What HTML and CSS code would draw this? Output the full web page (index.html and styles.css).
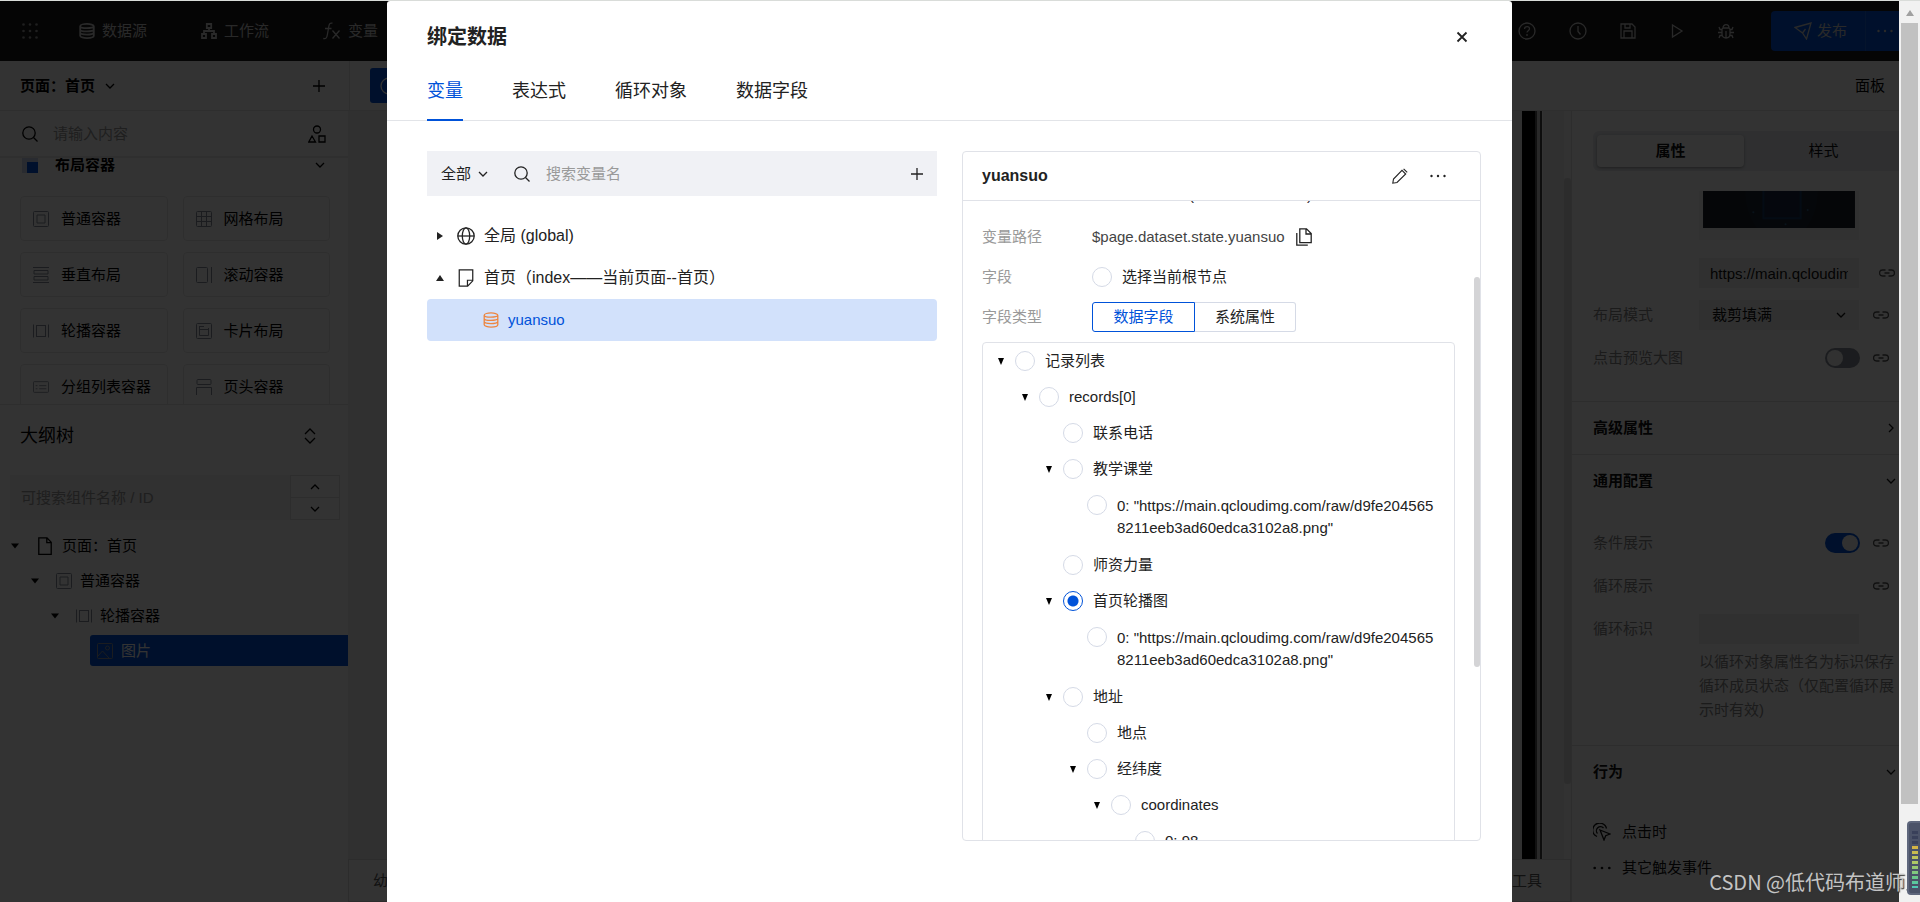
FILE: index.html
```html
<!DOCTYPE html>
<html lang="zh-CN">
<head>
<meta charset="utf-8">
<meta name="viewport" content="width=device-width, initial-scale=1">
<title>绑定数据</title>
<link rel="stylesheet" href="styles.css">
</head>
<body>
<svg class="sprite" aria-hidden="true">
  <symbol id="i-grid" viewBox="0 0 16 16"><g fill="currentColor" stroke="none"><circle cx="1.5" cy="1.5" r="1.3"/><circle cx="8" cy="1.5" r="1.3"/><circle cx="14.5" cy="1.5" r="1.3"/><circle cx="1.5" cy="8" r="1.3"/><circle cx="8" cy="8" r="1.3"/><circle cx="14.5" cy="8" r="1.3"/><circle cx="1.5" cy="14.5" r="1.3"/><circle cx="8" cy="14.5" r="1.3"/><circle cx="14.5" cy="14.5" r="1.3"/></g></symbol>
  <symbol id="i-db" viewBox="0 0 16 16"><path d="M1.200 3.200C1.200.2 14.800.2 14.800 3.200v9.600c0 3-13.600 3-13.600 0zM1.200 3.200c0 2.600 13.600 2.600 13.600 0M1.200 6.400c0 2.600 13.600 2.600 13.600 0M1.200 9.600c0 2.600 13.600 2.600 13.600 0"/></symbol>
  <symbol id="i-flow" viewBox="0 0 16 16"><path d="M5.800 1h4.400v4H5.800zM1 11h4v4H1zM11 11h4v4h-4zM8 5v3M3 11V8h10v3"/></symbol>
  <symbol id="i-fx" viewBox="0 0 18 18"><path d="M9.500 1.200C7 .5 6.200 2 5.800 4.500L4.300 13c-.5 3-1.500 4.200-4 3.500M2 6.500h6.500M9.500 8.500l7 8M16.500 8.500l-7 8"/></symbol>
  <symbol id="i-down" viewBox="0 0 16 16"><path d="M4 6l4 4 4-4"/></symbol>
  <symbol id="i-up" viewBox="0 0 16 16"><path d="M4 10l4-4 4 4"/></symbol>
  <symbol id="i-right" viewBox="0 0 16 16"><path d="M6 4l4 4-4 4"/></symbol>
  <symbol id="i-updown" viewBox="0 0 16 16"><path d="M3 6l5-5 5 5M3 10l5 5 5-5"/></symbol>
  <symbol id="i-plus" viewBox="0 0 16 16"><path d="M8 2v12M2 8h12"/></symbol>
  <symbol id="i-search" viewBox="0 0 16 16"><circle cx="7" cy="7" r="6.200"/><path d="M11.500 11.500l4 4"/></symbol>
  <symbol id="i-shapes" viewBox="0 0 18 18"><circle cx="9" cy="4.500" r="3.500"/><path d="M4 11l3.500 6H.8zM11 11h6v6h-6z"/></symbol>
  <symbol id="i-box" viewBox="0 0 16 16"><rect x=".5" y=".5" width="15" height="15" rx="1"/><path d="M4 4h8v8H4z"/></symbol>
  <symbol id="i-table" viewBox="0 0 16 16"><rect x=".5" y=".5" width="15" height="15" rx="1"/><path d="M.5 5.500h15M.5 10.500h15M5.500.5v15M10.500.5v15"/></symbol>
  <symbol id="i-rows" viewBox="0 0 16 16"><path d="M0 .5h16M0 15.500h16M1 3.500h14v3.500H1zM1 9.500h14v3.500H1z"/></symbol>
  <symbol id="i-scroll" viewBox="0 0 16 16"><rect x=".5" y=".5" width="11" height="15" rx="1"/><path d="M15.500 0v16"/></symbol>
  <symbol id="i-swiper" viewBox="0 0 16 16"><path d="M.5 1.500v13M15.500 1.500v13"/><rect x="3.500" y="2.500" width="9" height="11"/></symbol>
  <symbol id="i-card" viewBox="0 0 16 16"><rect x=".5" y=".5" width="15" height="15" rx="1"/><path d="M3 3.500h5M3.500 6.500h9v6h-9zM3.500 3v4M12.500 5v2"/></symbol>
  <symbol id="i-list" viewBox="0 0 18 16"><rect x=".5" y="2" width="17" height="12" rx="1"/><path d="M3 6.500h2M3 10h2M7 6.500h8M7 10h8"/></symbol>
  <symbol id="i-head" viewBox="0 0 16 16"><rect x="1" y=".5" width="14" height="5" rx="1"/><path d="M.5 16V8.500h15V16"/></symbol>
  <symbol id="i-file" viewBox="0 0 14 18"><path d="M1.500.8h7.500l4.200 4.500v12H.8V.8zM8.800.8v4.800h4.400"/></symbol>
  <symbol id="i-image" viewBox="0 0 16 16"><rect x=".5" y=".5" width="15" height="15" rx="1"/><circle cx="10.500" cy="5" r="2"/><path d="M1 13l4.500-5 6.500 7"/></symbol>
  <symbol id="i-help" viewBox="0 0 18 18"><circle cx="9" cy="9" r="8"/><path d="M6.500 7c0-3.200 5-3.200 5-.2 0 1.800-2.500 2-2.500 3.700M9 12v2"/></symbol>
  <symbol id="i-clock" viewBox="0 0 18 18"><circle cx="9" cy="9" r="8"/><path d="M9 4v5.500l2.500 3"/></symbol>
  <symbol id="i-save" viewBox="0 0 16 16"><path d="M1 1h11l3 3v11H1zM4 15V8h8v7M5 1v4h5V1"/></symbol>
  <symbol id="i-play" viewBox="0 0 16 16"><path d="M3.500 2l9.500 6-9.500 6z"/></symbol>
  <symbol id="i-bug" viewBox="0 0 16 16"><path d="M4 7c0-1 .5-1.800 1-2h6c.5.2 1 1 1 2v4c0 5.300-8 5.300-8 0zM5 5c0-4.500 6-4.500 6 0M8 8v7M0 9.500h4M12 9.500h4M1 4l1 2.500h2M15 4l-1 2.500h-2M1 15l1-2.500h2M15 15l-1-2.500h-2"/></symbol>
  <symbol id="i-plane" viewBox="0 0 18 18"><path d="M1 5.500L17 1l-4.500 16-4-6zM8.500 11l3-4"/></symbol>
  <symbol id="i-dots" viewBox="0 0 16 16"><g fill="currentColor" stroke="none"><circle cx="1.500" cy="8" r="1.200"/><circle cx="8" cy="8" r="1.200"/><circle cx="14.500" cy="8" r="1.200"/></g></symbol>
  <symbol id="i-link" viewBox="0 0 16 16"><path d="M6.500 5H3.500a2.800 2.800 0 0 0 0 6h3M9.500 5h3a2.800 2.800 0 0 1 0 6h-3M5.500 8h5"/></symbol>
  <symbol id="i-click" viewBox="0 0 18 18"><path d="M7 7l10 4-4.300 1.700L11 17zM4.500 10.500A4 4 0 1 1 10.500 5M4 13.500A7 7 0 1 1 13.500 5.500"/></symbol>
  <symbol id="i-close" viewBox="0 0 16 16"><path d="M3.500 3.500l9 9M12.500 3.500l-9 9"/></symbol>
  <symbol id="i-globe" viewBox="0 0 18 18"><circle cx="9" cy="9" r="8.200"/><ellipse cx="9" cy="9" rx="3.700" ry="8.200"/><path d="M.8 9h16.400"/></symbol>
  <symbol id="i-note" viewBox="0 0 16 16"><path d="M2 .7h12v9.800L9.500 15.300H2zM14 10H9.300v5.300"/></symbol>
  <symbol id="i-pencil" viewBox="0 0 16 16"><path d="M.8 15.200l.7-4.200L10 2.300l3.700 3.700L5 14.500zM11.600.8l3.600 3.600"/></symbol>
  <symbol id="i-copy" viewBox="0 0 16 18"><path d="M3.800.8h6.700l4.700 4.700v9.200H3.800zM10 .8V6h5.200M.8 5v12.200h11"/></symbol>
  <symbol id="i-tri-down" viewBox="0 0 8 8"><path d="M0 1.500h8L4 6.500z" fill="currentColor" stroke="none"/></symbol>
  <symbol id="i-tri-slim" viewBox="0 0 8 8"><path d="M1 1h6L4 8z" fill="currentColor" stroke="none"/></symbol>
  <symbol id="i-tri-up" viewBox="0 0 8 8"><path d="M0 7h8L4 1z" fill="currentColor" stroke="none"/></symbol>
  <symbol id="i-tri-right" viewBox="0 0 8 8"><path d="M1 0v8l6-4z" fill="currentColor" stroke="none"/></symbol>
</svg>

<div class="window">
  <div class="app">
    <header class="topbar">
      <button class="ghost" aria-label="菜单"><svg class="ic"><use href="#i-grid"/></svg></button>
      <nav class="topnav">
        <a href="#data"><svg class="ic bold"><use href="#i-db"/></svg>数据源</a>
        <a href="#flow"><svg class="ic bold"><use href="#i-flow"/></svg>工作流</a>
        <a href="#var"><svg class="ic l"><use href="#i-fx"/></svg>变量</a>
      </nav>
      <div class="tools">
        <button class="ghost" aria-label="帮助"><svg class="ic l"><use href="#i-help"/></svg></button>
        <button class="ghost" aria-label="历史"><svg class="ic l"><use href="#i-clock"/></svg></button>
        <button class="ghost" aria-label="保存"><svg class="ic"><use href="#i-save"/></svg></button>
        <button class="ghost" aria-label="预览"><svg class="ic"><use href="#i-play"/></svg></button>
        <button class="ghost" aria-label="调试"><svg class="ic"><use href="#i-bug"/></svg></button>
      </div>
      <div class="publish">
        <button class="publish-main"><svg class="ic l"><use href="#i-plane"/></svg>发布</button>
        <button class="publish-more" aria-label="更多"><svg class="ic"><use href="#i-dots"/></svg></button>
      </div>
    </header>

    <div class="subbar">
      <div class="pagebar">
        <button class="page-switch">页面：首页<svg class="ic"><use href="#i-down"/></svg></button>
        <button class="ghost" aria-label="新建页面"><svg class="ic"><use href="#i-plus"/></svg></button>
      </div>
      <div class="stagebar">
        <button class="stage-btn" aria-label="模式"><svg class="ic l"><use href="#i-clock"/></svg></button>
        <span class="panel-link">面板</span>
      </div>
    </div>

    <div class="main">
      <aside class="left">
        <div class="lib-search">
          <svg class="ic"><use href="#i-search"/></svg>
          <input type="text" placeholder="请输入内容" aria-label="搜索组件">
          <svg class="ic l"><use href="#i-shapes"/></svg>
        </div>
        <div class="library">
          <div class="lib-inner">
            <div class="lib-head"><span class="lib-logo"></span><b>布局容器</b><svg class="ic"><use href="#i-down"/></svg></div>
            <div class="cards">
              <button class="card"><svg class="ic dim"><use href="#i-box"/></svg>普通容器</button>
              <button class="card"><svg class="ic dim"><use href="#i-table"/></svg>网格布局</button>
              <button class="card"><svg class="ic dim"><use href="#i-rows"/></svg>垂直布局</button>
              <button class="card"><svg class="ic dim"><use href="#i-scroll"/></svg>滚动容器</button>
              <button class="card"><svg class="ic dim"><use href="#i-swiper"/></svg>轮播容器</button>
              <button class="card"><svg class="ic dim"><use href="#i-card"/></svg>卡片布局</button>
              <button class="card"><svg class="ic dim"><use href="#i-list"/></svg>分组列表容器</button>
              <button class="card"><svg class="ic dim"><use href="#i-head"/></svg>页头容器</button>
            </div>
          </div>
        </div>
        <section class="outline">
          <div class="outline-head"><span>大纲树</span><svg class="ic"><use href="#i-updown"/></svg></div>
          <div class="outline-search">
            <input type="text" placeholder="可搜索组件名称 / ID" aria-label="搜索大纲">
            <div class="stepper">
              <button aria-label="上一个"><svg class="ic"><use href="#i-up"/></svg></button>
              <button aria-label="下一个"><svg class="ic"><use href="#i-down"/></svg></button>
            </div>
          </div>
          <ul class="otree">
            <li><div class="orow"><svg class="tri"><use href="#i-tri-down"/></svg><svg class="ic l"><use href="#i-file"/></svg>页面：首页</div>
              <ul><li><div class="orow"><svg class="tri"><use href="#i-tri-down"/></svg><svg class="ic dim"><use href="#i-box"/></svg>普通容器</div>
                <ul><li><div class="orow"><svg class="tri"><use href="#i-tri-down"/></svg><svg class="ic dim"><use href="#i-swiper"/></svg>轮播容器</div>
                  <div class="orow chosen"><svg class="ic dim"><use href="#i-image"/></svg>图片</div>
                </li></ul>
              </li></ul>
            </li>
          </ul>
        </section>
      </aside>

      <section class="stage">
        <div class="canvas"><div class="device"></div><div class="canvas-scroll"><div class="canvas-thumb"></div></div></div>
        <div class="crumbs"><span>幼儿</span><span>开发工具</span></div>
      </section>

      <aside class="right">
        <div class="props">
          <div class="seg"><button class="on">属性</button><button>样式</button></div>
          <div class="thumb-card">
            <svg viewBox="0 0 151 37" role="img" aria-label="图片预览"><rect width="151" height="37" fill="#1c222b"/><ellipse cx="78" cy="0" rx="36" ry="50" fill="#1b2534"/><path d="M60 0v27h37V0" fill="#1a2740" stroke="#173a63" stroke-width="2"/><circle cx="50" cy="21" r="1" fill="#2b5c80"/><circle cx="104" cy="19" r="1" fill="#2b5c80"/><circle cx="82" cy="33" r="1" fill="#2b5c80"/></svg>
          </div>
          <div class="prow url"><span class="plabel"></span><input type="text" value="https://main.qcloudimg.com/raw" aria-label="图片地址"><svg class="ic"><use href="#i-link"/></svg></div>
          <div class="prow"><label class="plabel" for="mode">布局模式</label><span class="pick"><select id="mode"><option>裁剪填满</option></select><svg class="ic"><use href="#i-down"/></svg></span><svg class="ic"><use href="#i-link"/></svg></div>
          <div class="prow"><label class="plabel wide" for="zoom">点击预览大图</label><input class="switch" type="checkbox" id="zoom"><svg class="ic"><use href="#i-link"/></svg></div>
        </div>
        <div class="fold"><b>高级属性</b><svg class="ic"><use href="#i-right"/></svg></div>
        <div class="fold"><b>通用配置</b><svg class="ic"><use href="#i-down"/></svg></div>
        <div class="common">
          <div class="prow"><label class="plabel wide" for="cond">条件展示</label><input class="switch" type="checkbox" id="cond" checked><svg class="ic"><use href="#i-link"/></svg></div>
          <div class="prow"><span class="plabel wide">循环展示</span><svg class="ic"><use href="#i-link"/></svg></div>
          <div class="prow"><label class="plabel" for="key">循环标识</label><input type="text" id="key"></div>
          <p class="help">以循环对象属性名为标识保存循环成员状态（仅配置循环展示时有效)</p>
        </div>
        <div class="fold"><b>行为</b><svg class="ic"><use href="#i-down"/></svg></div>
        <ul class="events">
          <li><svg class="ic l"><use href="#i-click"/></svg>点击时</li>
          <li><svg class="ic l"><use href="#i-dots"/></svg>其它触发事件</li>
        </ul>
      </aside>
    </div>

    <div class="mask">
      <div class="dialog" role="dialog" aria-labelledby="dlg-title">
        <div class="dlg-head"><h1 id="dlg-title">绑定数据</h1><button class="ghost" aria-label="关闭"><svg class="ic bold"><use href="#i-close"/></svg></button></div>
        <div class="tabs" role="tablist">
          <button role="tab" aria-selected="true">变量</button>
          <button role="tab" aria-selected="false">表达式</button>
          <button role="tab" aria-selected="false">循环对象</button>
          <button role="tab" aria-selected="false">数据字段</button>
        </div>
        <div class="dlg-body">
          <section class="vars">
            <div class="vsearch">
              <button class="all">全部<svg class="ic"><use href="#i-down"/></svg></button>
              <svg class="ic"><use href="#i-search"/></svg>
              <input type="text" placeholder="搜索变量名" aria-label="搜索变量名">
              <button class="ghost" aria-label="新建变量"><svg class="ic"><use href="#i-plus"/></svg></button>
            </div>
            <ul class="vtree">
              <li><svg class="tri"><use href="#i-tri-right"/></svg><svg class="ic l"><use href="#i-globe"/></svg><span>全局 (global)</span></li>
              <li><svg class="tri"><use href="#i-tri-up"/></svg><svg class="ic l thin"><use href="#i-note"/></svg><span>首页（index——当前页面--首页）</span></li>
              <li class="picked"><svg class="ic"><use href="#i-db"/></svg><span>yuansuo</span></li>
            </ul>
          </section>
          <section class="detail">
            <div class="detail-head"><h2>yuansuo</h2>
              <button class="ghost" aria-label="编辑"><svg class="ic thin"><use href="#i-pencil"/></svg></button>
              <button class="ghost" aria-label="更多"><svg class="ic"><use href="#i-dots"/></svg></button></div>
            <div class="detail-scroll">
              <div class="detail-body">
                <div class="drow past" aria-hidden="true"><span>(</span><span>)</span></div>
                <div class="drow"><span class="dlabel">变量路径</span><span class="path">$page.dataset.state.yuansuo</span><button class="ghost" aria-label="复制"><svg class="ic l"><use href="#i-copy"/></svg></button></div>
                <div class="drow"><span class="dlabel">字段</span><input type="radio" name="f" id="root"><label for="root">选择当前根节点</label></div>
                <div class="drow"><span class="dlabel">字段类型</span><div class="kinds"><button class="on">数据字段</button><button>系统属性</button></div></div>
                <ul class="ftree">
                  <li><div class="frow"><svg class="tri"><use href="#i-tri-slim"/></svg><input type="radio" name="f" id="f1"><label for="f1">记录列表</label></div>
                  <ul><li><div class="frow"><svg class="tri"><use href="#i-tri-slim"/></svg><input type="radio" name="f" id="f2"><label for="f2">records[0]</label></div>
                    <ul>
                      <li><div class="frow"><span class="tri"></span><input type="radio" name="f" id="f3"><label for="f3">联系电话</label></div></li>
                      <li><div class="frow"><svg class="tri"><use href="#i-tri-slim"/></svg><input type="radio" name="f" id="f4"><label for="f4">教学课堂</label></div>
                        <ul><li><div class="frow long"><span class="tri"></span><input type="radio" name="f" id="f5"><label for="f5">0: "https://main.qcloudimg.com/raw/d9fe2045658211eeb3ad60edca3102a8.png"</label></div></li></ul></li>
                      <li><div class="frow"><span class="tri"></span><input type="radio" name="f" id="f6"><label for="f6">师资力量</label></div></li>
                      <li><div class="frow"><svg class="tri"><use href="#i-tri-slim"/></svg><input type="radio" name="f" id="f7" checked><label for="f7">首页轮播图</label></div>
                        <ul><li><div class="frow long"><span class="tri"></span><input type="radio" name="f" id="f8"><label for="f8">0: "https://main.qcloudimg.com/raw/d9fe2045658211eeb3ad60edca3102a8.png"</label></div></li></ul></li>
                      <li><div class="frow"><svg class="tri"><use href="#i-tri-slim"/></svg><input type="radio" name="f" id="f9"><label for="f9">地址</label></div>
                        <ul>
                          <li><div class="frow"><span class="tri"></span><input type="radio" name="f" id="f10"><label for="f10">地点</label></div></li>
                          <li><div class="frow"><svg class="tri"><use href="#i-tri-slim"/></svg><input type="radio" name="f" id="f11"><label for="f11">经纬度</label></div>
                            <ul><li><div class="frow"><svg class="tri"><use href="#i-tri-slim"/></svg><input type="radio" name="f" id="f12"><label for="f12">coordinates</label></div>
                              <ul><li><div class="frow"><span class="tri"></span><input type="radio" name="f" id="f13"><label for="f13">0: 98</label></div></li></ul></li></ul></li>
                        </ul></li>
                    </ul></li></ul></li>
                </ul>
              </div>
              <div class="detail-bar"></div>
            </div>
          </section>
        </div>
      </div>
    </div>
  </div>

  <div class="scrollbar"><svg class="tri"><use href="#i-tri-up"/></svg><div class="scroll-thumb"></div><svg class="tri dark"><use href="#i-tri-down"/></svg></div>
  <div class="meter"></div>
  <div class="watermark">CSDN @低代码布道师</div>
</div>
</body>
</html>
```
FILE: styles.css
```css
* { box-sizing: border-box; }
body, ul, h1, h2, p { margin: 0; padding: 0; }
ul { list-style: none; }
body {
  font: 15px/22px "Liberation Sans", "Noto Sans CJK SC", sans-serif;
  color: #000;
  background: #d9dcd9;
  overflow: hidden;
}
button, input, select { font: inherit; color: inherit; border: 0; background: none; padding: 0; margin: 0; outline: 0; }
input { min-width: 0; }
button { white-space: nowrap; }
a { color: inherit; text-decoration: none; }
.sprite { position: absolute; width: 0; height: 0; }
.ic { width: 16px; height: 16px; flex: none; fill: none; stroke: currentColor; stroke-width: 1.3; }
.ic.l { width: 18px; height: 18px; }
.ic.bold { stroke-width: 1.8; }
.ic.thin { stroke-width: 1.1; }
.ic.dim { color: #878e9c; stroke-width: 1; }
.tri { width: 8px; height: 8px; flex: none; }
.ghost { display: flex; }

.window { position: relative; display: flex; height: 100vh; padding-top: 1px; }
.app { position: relative; flex: 1; min-width: 0; display: flex; flex-direction: column; background: #fff; overflow: hidden; }

/* top bar */
.topbar { height: 60px; flex: none; display: flex; align-items: center; padding-left: 22px; background: #191919; color: #ccc; }
.topbar > .ghost { color: #999; }
.topnav { display: flex; gap: 54px; margin-left: 41px; }
.topnav a { display: flex; align-items: center; gap: 7px; }
.tools { display: flex; align-items: center; gap: 33px; margin-left: auto; margin-right: 37px; }
.publish { display: flex; height: 40px; background: #0052d9; border-radius: 4px 0 0 4px; }
.publish-main { display: flex; align-items: center; gap: 5px; padding: 0 18px 0 23px; }
.publish-more { display: flex; align-items: center; padding: 0 6px 0 11px; border-left: 1px solid #1a66dd; }

.subbar { height: 50px; flex: none; display: flex; border-bottom: 1px solid #e4e4e4; }
.pagebar { width: 350px; flex: none; display: flex; align-items: center; justify-content: space-between; padding: 0 22px 0 20px; border-right: 1px solid #e4e4e4; }
.page-switch { display: flex; align-items: center; gap: 7px; font-weight: bold; }
.stagebar { flex: 1; display: flex; align-items: center; justify-content: space-between; padding: 0 14px 0 20px; }
.stage-btn { display: flex; align-items: center; width: 35px; height: 35px; padding-left: 10px; background: #0052d9; color: #fff; border-radius: 3px; }

.main { flex: 1; min-height: 0; display: flex; }

/* component library and outline */
.left { width: 348px; flex: none; display: flex; flex-direction: column; }
.lib-search { height: 47px; flex: none; display: flex; align-items: center; padding: 0 22px; gap: 15px; border-bottom: 2px solid #e8e8e8; }
.lib-search input { flex: 1; }
::placeholder { color: #999; opacity: 1; }
.library { height: 246px; flex: none; overflow: hidden; }
.lib-inner { margin-top: -13px; }
.lib-head { height: 40px; display: flex; align-items: center; padding: 0 20px 0 22px; }
.lib-head b { flex: 1; margin-left: 17px; }
.lib-logo { width: 16px; height: 16px; border-style: solid; border-color: #ccd8ee; border-width: 5px 0 0 5px; background: #0052d9; }
.cards { display: grid; grid-template-columns: 1fr 1fr; gap: 11px 15px; padding: 11px 18px 0 20px; }
.card { height: 45px; display: flex; align-items: center; gap: 12px; padding-left: 12px; border: 1px solid #e6e6e6; border-radius: 4px; }
.outline { flex: 1; border-top: 1px solid #e4e4e4; }
.outline-head { height: 62px; display: flex; align-items: center; justify-content: space-between; padding: 0 30px 0 20px; font-size: 18px; }
.outline-search { display: flex; margin: 8px 8px 8px 10px; height: 45px; background: #f2f2f2; }
.outline-search input { flex: 1; padding-left: 11px; }
.stepper { width: 50px; display: grid; border: 1px solid #e0e0e0; background: #fff; }
.stepper button { display: flex; align-items: center; justify-content: center; }
.stepper button + button { border-top: 1px solid #e0e0e0; }
.otree ul { padding-left: 20px; }
.orow { height: 35px; display: flex; align-items: center; gap: 8px; padding-left: 11px; }
.orow .tri { margin-right: 9px; }
.chosen { height: 31px; margin: 2px 0 0 50px; padding-left: 7px; background: #0052d9; color: #fff; border-radius: 3px 0 0 3px; }

/* stage */
.stage { flex: 1; min-width: 0; display: flex; flex-direction: column; background: #f0f0f0; }
.canvas { flex: 1; display: flex; justify-content: flex-end; }
.device { width: 21px; margin-right: 21px; background: linear-gradient(90deg, #000 0 13px, #555 13px 15px, #ccc 15px 18px, #444 18px 20px, #fff 20px); }
.canvas-scroll { width: 7px; background: #f7f7f7; padding-top: 67px; }
.canvas-thumb { height: 89%; border-radius: 3px; background: #dcdcdc; }
.crumbs { height: 43px; flex: none; display: flex; align-items: center; justify-content: space-between; padding: 0 28px 0 24px; background: #fff; border: 1px solid #ddd; color: #555; }

/* property panel */
.right { width: 328px; flex: none; border-left: 1px solid #e2e2e2; overflow: hidden; color: #111; }
.props { height: 290px; padding: 20px 0 0 21px; }
.seg { display: flex; width: 314px; height: 40px; padding: 4px; background: #e8ebf0; border-radius: 6px; }
.seg button { flex: 1; border-radius: 4px; }
.seg .on { flex: none; width: 147px; background: #fff; font-weight: bold; box-shadow: 0 1px 3px #999; }
.thumb-card { width: 160px; height: 49px; margin: 20px 0 17px 106px; padding: 0 4px; background: #f4f4f4; }
.thumb-card svg { display: block; width: 100%; }
.prow { height: 43px; display: flex; align-items: center; width: 296px; }
.prow.url { height: 32px; margin-bottom: 4px; width: 302px; }
.plabel { width: 106px; flex: none; color: #888; }
.plabel.wide { flex: 1; }
.prow input[type="text"] { width: 160px; height: 30px; padding: 0 11px; background: #f1f1f1; }
.prow > .ic { color: #555; margin-left: auto; }
.prow .switch + .ic { margin-left: 13px; }
.pick { display: flex; align-items: center; width: 160px; height: 30px; background: #f1f1f1; padding-right: 10px; }
.pick select { appearance: none; flex: 1; padding-left: 13px; }
.switch { appearance: none; width: 35px; height: 20px; border-radius: 10px; background: #888e99; padding: 2px; display: flex; }
.switch::before { content: ""; width: 16px; height: 16px; border-radius: 50%; background: #f5f5f5; }
.switch:checked { background: #0052d9; justify-content: flex-end; }
.fold { height: 53px; display: flex; align-items: center; padding-left: 21px; border-top: 1px solid #e2e2e2; }
.fold b { width: 294px; }
.fold .ic { margin-left: 4px; }
.common { height: 238px; padding: 14px 0 0 21px; }
.help { width: 200px; margin: 0 0 0 106px; line-height: 24px; color: #888; }
.events { padding: 16px 0 0 21px; }
.events li { height: 36px; display: flex; align-items: center; gap: 11px; }

/* modal */
.mask { position: absolute; inset: 0; display: flex; justify-content: center; background: rgba(0, 0, 0, 0.8); }
.dialog { width: 1125px; max-width: 100%; display: flex; flex-direction: column; background: #fff; border-radius: 3px 3px 0 0; color: #222; }
.dlg-head { height: 72px; flex: none; display: flex; align-items: center; justify-content: space-between; padding: 0 42px 0 40px; }
h1 { font-size: 20px; line-height: 28px; }
.tabs { height: 48px; flex: none; display: flex; gap: 49px; padding: 0 40px; border-bottom: 1px solid #e2e4e8; }
.tabs button { font-size: 18px; height: 48px; padding-bottom: 10px; border-bottom: 2px solid transparent; }
.tabs [aria-selected="true"] { color: #0052d9; border-color: #0052d9; }
.dlg-body { flex: 1; min-height: 0; display: flex; gap: 25px; padding: 30px 31px 61px 40px; }
.vars { flex: 1; min-width: 0; }
.vsearch { height: 45px; display: flex; align-items: center; padding: 0 12px 0 14px; background: #f0f1f5; }
.vsearch input { flex: 1; margin-left: 16px; }
.all { display: flex; align-items: center; gap: 4px; margin-right: 23px; }
.vtree { padding-top: 19px; font-size: 16px; }
.vtree li { height: 42px; display: flex; align-items: center; padding-left: 9px; }
.vtree .ic { margin: 0 9px 0 13px; }
.vtree .picked { font-size: 15px; padding-left: 43px; background: #d2e1fb; border-radius: 4px; color: #0052d9; }
.picked .ic { color: #ed8640; }

.detail { width: 519px; flex: none; display: flex; flex-direction: column; border: 1px solid #e0e2e8; border-radius: 4px; overflow: hidden; }
.detail-head { height: 49px; flex: none; display: flex; align-items: center; gap: 22px; padding: 0 34px 0 19px; border-bottom: 1px solid #e0e2e8; }
h2 { flex: 1; font-size: 16px; line-height: 22px; }
.detail-scroll { flex: 1; min-height: 0; display: flex; overflow: hidden; }
.detail-body { flex: 1; margin-top: -24px; padding: 0 19px; }
.detail-bar { width: 6px; height: 390px; margin-top: 76px; border-radius: 3px; background: #d4d4d6; }
.drow { height: 40px; display: flex; align-items: center; }
.drow.past { padding: 0 0 4px 207px; gap: 113px; }
.dlabel { width: 110px; color: #999; }
.path { margin-right: 10px; color: #444; }
input[type="radio"] { appearance: none; flex: none; width: 20px; height: 20px; margin-right: 10px; border: 1px solid #d5dae6; border-radius: 50%; background: #fff; }
input[type="radio"]:checked { border-color: #0052d9; background: radial-gradient(circle, #0052d9 0 5px, #fff 6px); }
.kinds { display: flex; }
.kinds button { width: 101px; height: 30px; border: 1px solid #d5dae6; border-left: 0; border-radius: 0 3px 3px 0; }
.kinds .on { width: 103px; border: 1px solid #0052d9; border-radius: 3px 0 0 3px; color: #0052d9; }
.ftree { margin-top: 5px; padding-right: 16px; border: 1px solid #e0e2e8; border-radius: 4px; }
.ftree ul { padding-left: 24px; }
.frow { min-height: 36px; display: flex; align-items: center; padding-left: 14px; }
.frow .tri { color: #000; margin-right: 10px; }
.frow.long { align-items: flex-start; padding-top: 8px; padding-bottom: 8px; }
.frow label { word-break: break-all; }

/* browser scroll bar and overlays */
.scrollbar { width: 21px; flex: none; display: flex; flex-direction: column; align-items: center; padding: 8px 0 6px; gap: 6px; background: #f1f1f1; color: #a0a0a0; }
.scroll-thumb { width: 17px; height: 88%; background: #c1c1c1; }
.scrollbar .dark { margin-top: auto; color: #444; }
.meter { position: absolute; right: 0; bottom: 7px; width: 13px; height: 74px; border: 2px solid #5e667c; border-right: 0; border-radius: 4px 0 0 4px; background: repeating-linear-gradient(#4b5268 0 2px, transparent 2px 5px) 3px 6px / 6px 58px no-repeat, linear-gradient(#39405a 0 14px, #d8b040 15px, #b8c860 30px, #60c890 50px, #50c8b8) 3px 7px / 6px 58px no-repeat, #4b5268; }
.watermark { position: absolute; right: 15px; bottom: 6px; font: 20px/28px "Noto Sans CJK SC", sans-serif; color: #c4c4c4; text-shadow: 1px 1px 1px #333; }
```
